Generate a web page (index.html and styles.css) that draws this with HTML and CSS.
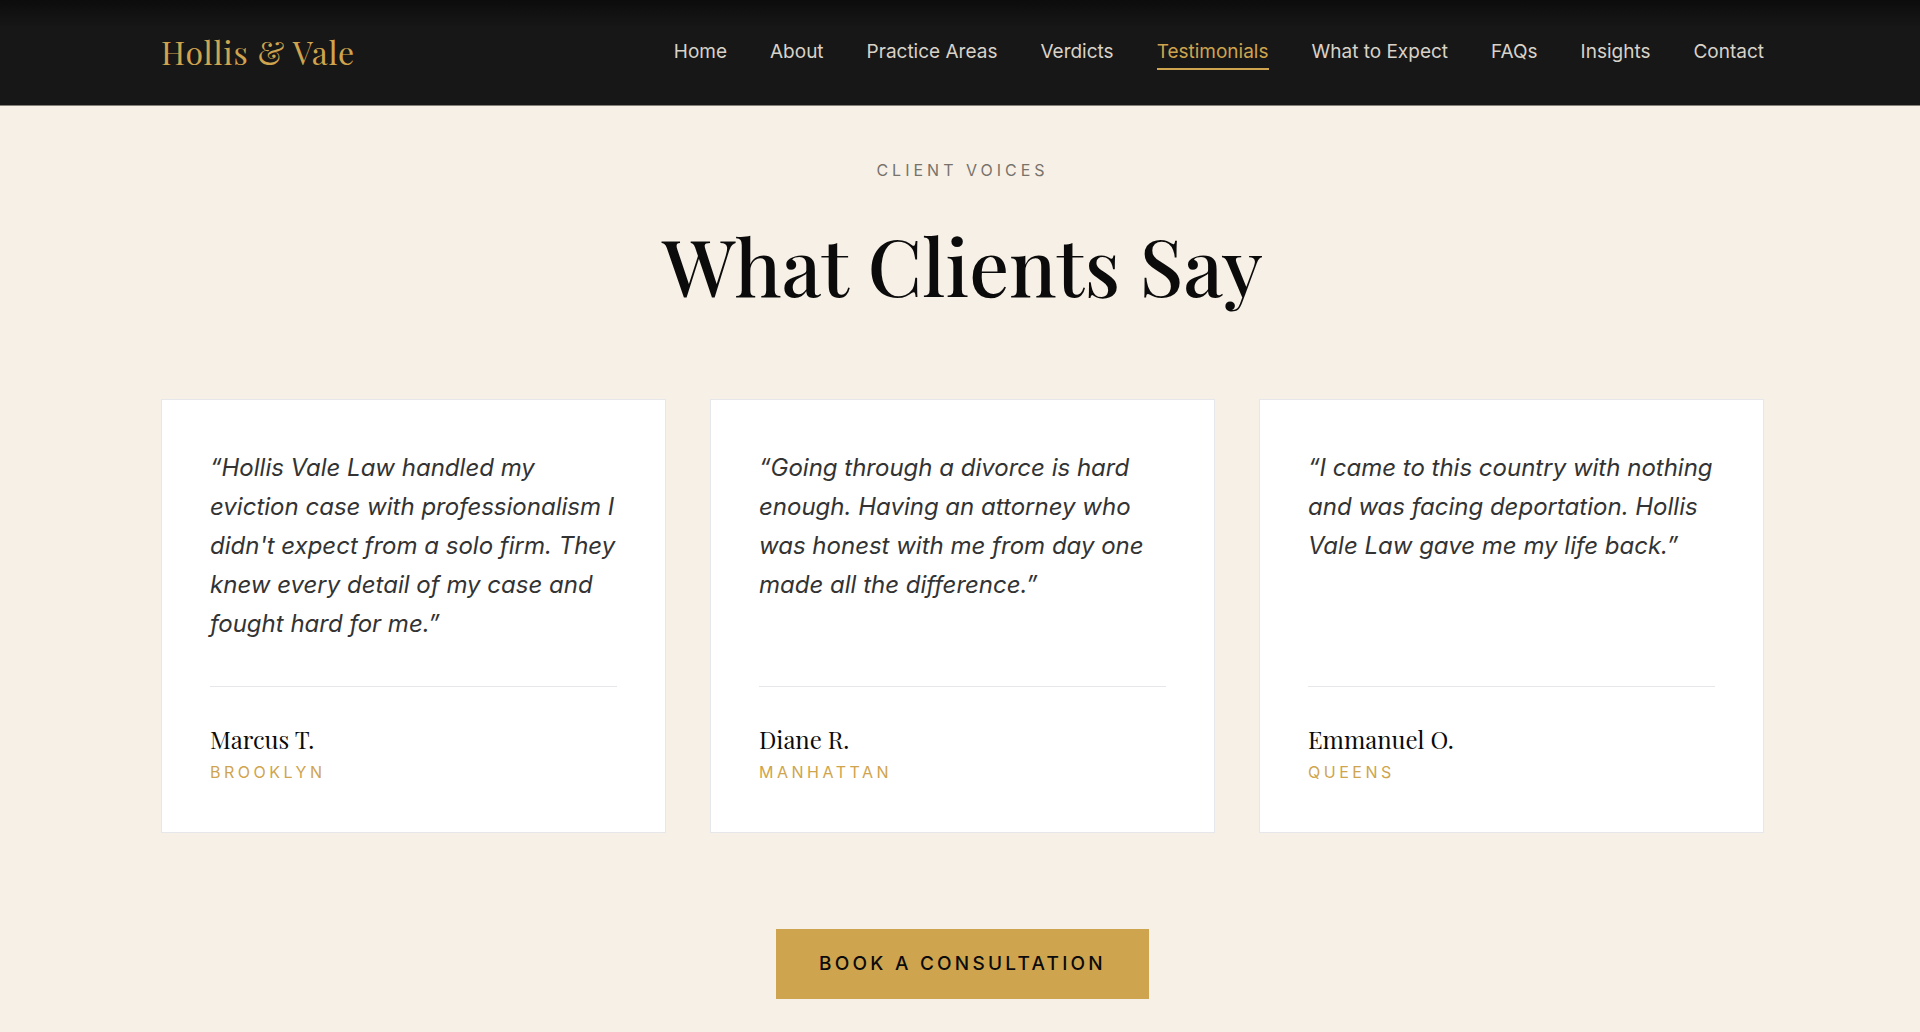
FILE: index.html
```html
<!DOCTYPE html>
<html lang="en">
<head>
  <meta charset="utf-8">
  <meta name="viewport" content="width=device-width, initial-scale=1">
  <title>Testimonials | Hollis &amp; Vale</title>
  <link rel="stylesheet" href="styles.css">
</head>
<body>
  <header class="site-header">
    <a class="logo" href="#">Hollis &amp; Vale</a>
    <nav class="nav" aria-label="Main">
      <a class="nav-link" href="#">Home</a>
      <a class="nav-link" href="#">About</a>
      <a class="nav-link" href="#">Practice Areas</a>
      <a class="nav-link" href="#">Verdicts</a>
      <a class="nav-link is-active" href="#" aria-current="page">Testimonials</a>
      <a class="nav-link" href="#">What to Expect</a>
      <a class="nav-link" href="#">FAQs</a>
      <a class="nav-link" href="#">Insights</a>
      <a class="nav-link" href="#">Contact</a>
    </nav>
  </header>
  <main class="testimonials">
    <p class="eyebrow">Client Voices</p>
    <h1 class="title">What Clients Say</h1>
    <div class="cards">
      <article class="card">
        <blockquote class="quote">“Hollis Vale Law handled my eviction case with professionalism I didn't expect from a solo firm. They knew every detail of my case and fought hard for me.”</blockquote>
        <footer class="author">
          <p class="author-name">Marcus T.</p>
          <p class="author-place">Brooklyn</p>
        </footer>
      </article>
      <article class="card">
        <blockquote class="quote">“Going through a divorce is hard enough. Having an attorney who was honest with me from day one made all the difference.”</blockquote>
        <footer class="author">
          <p class="author-name">Diane R.</p>
          <p class="author-place">Manhattan</p>
        </footer>
      </article>
      <article class="card">
        <blockquote class="quote">“I came to this country with nothing and was facing deportation. Hollis Vale Law gave me my life back.”</blockquote>
        <footer class="author">
          <p class="author-name">Emmanuel O.</p>
          <p class="author-place">Queens</p>
        </footer>
      </article>
    </div>
    <button class="cta" type="button">Book a Consultation</button>
  </main>
</body>
</html>
```
FILE: styles.css
```css
:root {
  --gold: #cfa44e;
  --ink: #0b0b0b;
  --cream: #f7f0e6;
  --line: #e5e7eb;
  --serif: "Playfair Display", "Liberation Serif", serif;
  --sans: Inter, "Liberation Sans", sans-serif;
}

* {
  box-sizing: border-box;
}

body {
  margin: 0;
  background: var(--cream);
  color: var(--ink);
  font-family: var(--sans);
}

p,
h1,
blockquote {
  margin: 0;
}

.site-header {
  display: flex;
  align-items: center;
  justify-content: space-between;
  padding: 31px 156px 33px 161px;
  border-bottom: 1px solid #858079;
  background: linear-gradient(#0c0c0c, #171717 28px);
}

.logo {
  color: var(--gold);
  font-family: var(--serif);
  font-size: 32px;
  line-height: 41px;
  letter-spacing: 0.025em;
  text-decoration: none;
}

.nav {
  display: flex;
  gap: 43px;
}

.nav-link {
  padding: 4px 0 2px;
  border-bottom: 2px solid transparent;
  color: #d8d2c9;
  font-size: 19px;
  line-height: 28px;
  text-decoration: none;
}

.nav-link.is-active {
  border-color: var(--gold);
  color: var(--gold);
}

.testimonials {
  display: flex;
  flex-direction: column;
  align-items: center;
  padding: 52px 156px 33px 161px;
}

.eyebrow {
  color: #77736c;
  font-size: 16px;
  line-height: 24px;
  letter-spacing: 4px;
  text-transform: uppercase;
}

.title {
  margin: 33px 0 84px;
  font-family: var(--serif);
  font-size: 79px;
  font-weight: 500;
  line-height: 100px;
}

.cards {
  display: grid;
  grid-template-columns: repeat(3, 1fr);
  gap: 44px;
  width: 100%;
}

.card {
  display: flex;
  flex-direction: column;
  justify-content: space-between;
  gap: 43px;
  padding: 48px;
  border: 1px solid var(--line);
  background: #fff;
}

.quote {
  color: #333;
  font-size: 24px;
  font-style: italic;
  line-height: 39px;
}

.author {
  padding-top: 35px;
  border-top: 1px solid var(--line);
}

.author-name {
  margin-bottom: 4px;
  font-family: var(--serif);
  font-size: 24px;
  line-height: 34px;
}

.author-place {
  color: var(--gold);
  font-size: 16px;
  line-height: 24px;
  letter-spacing: 0.22em;
  text-transform: uppercase;
}

.cta {
  margin-top: 96px;
  padding: 20px 43px;
  border: 0;
  background: var(--gold);
  color: var(--ink);
  font-family: var(--sans);
  font-size: 19px;
  font-weight: 500;
  line-height: 30px;
  letter-spacing: 0.17em;
  text-transform: uppercase;
  cursor: pointer;
}
```
